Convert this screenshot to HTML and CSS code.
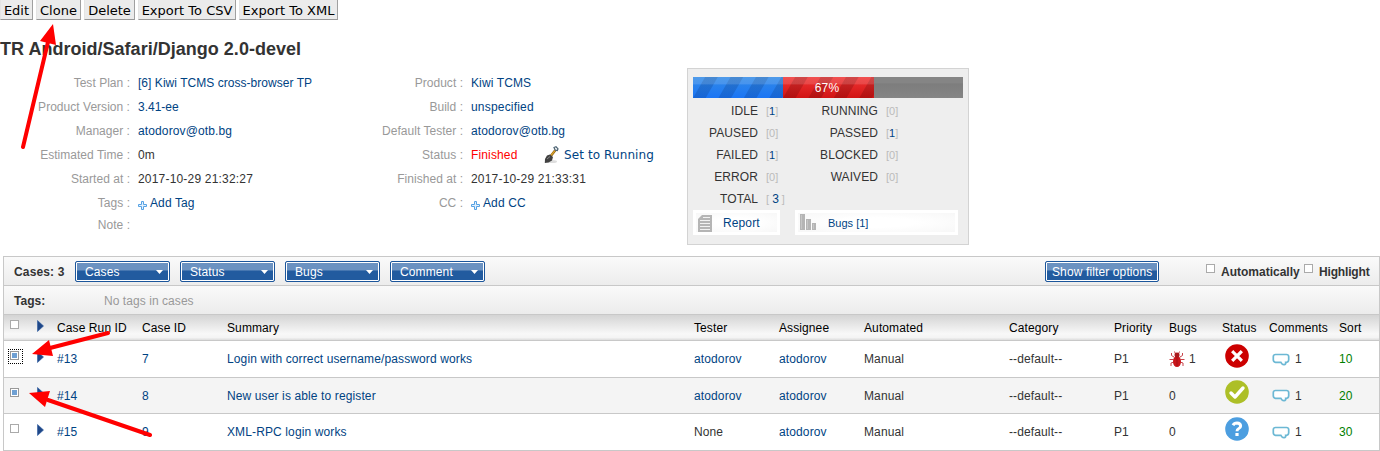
FILE: index.html
```html
<!DOCTYPE html>
<html lang="en">
<head>
<meta charset="utf-8">
<title>TR Android/Safari/Django 2.0-devel</title>
<link rel="stylesheet" href="styles.css">
</head>
<body>
<svg class="defs" width="0" height="0">
  <defs>
    <symbol id="tri" viewBox="0 0 7 12"><path d="M0.5 0.5 6.5 6 0.5 11.5z" fill="#1f4788" stroke="#2c5aa0" stroke-width=".6"/></symbol>
    <symbol id="plus" viewBox="0 0 9 9"><path d="M3.5.5h2v3h3v2h-3v3h-2v-3h-3v-2h3z" fill="#e4f1fd" stroke="#56a2e4"/></symbol>
    <symbol id="bubble" viewBox="0 0 18 13"><path d="M3.5 1.500h11q2 0 2.200 2v3.300q-.2 2.400-2.200 2.500h-.8q.3 1.900-1.700 2.400-1.700.2-3.100-2.400H3.500Q1.300 9 1.300 6.800V3.500q.2-2 2.200-2z" fill="#fff" stroke="#6cb8d4" stroke-width="1.700"/></symbol>
  </defs>
</svg>
<div class="toolbar">
  <button class="b-edit">Edit</button><button class="b-clone">Clone</button><button class="b-delete">Delete</button><button class="b-csv">Export To CSV</button><button class="b-xml">Export To XML</button>
</div>
<h1>TR Android/Safari/Django 2.0-devel</h1>
<div class="summary">
  <dl class="info first">
    <dt>Test Plan :</dt><dd><a class="plan">[6] Kiwi TCMS cross-browser TP</a></dd>
    <dt>Product Version :</dt><dd><a>3.41-ee</a></dd>
    <dt>Manager :</dt><dd><a class="wide">atodorov@otb.bg</a></dd>
    <dt>Estimated Time :</dt><dd>0m</dd>
    <dt>Started at :</dt><dd class="date">2017-10-29 21:32:27</dd>
    <dt>Tags :</dt><dd><svg class="plus"><use href="#plus"/></svg><a class="wide">Add Tag</a></dd>
    <dt>Note :</dt><dd></dd>
  </dl>
  <dl class="info second">
    <dt>Product :</dt><dd><a class="wide">Kiwi TCMS</a></dd>
    <dt>Build :</dt><dd><a class="wide date">unspecified</a></dd>
    <dt>Default Tester :</dt><dd><a class="wide">atodorov@otb.bg</a></dd>
    <dt>Status :</dt><dd><span class="finished">Finished</span><svg class="shovel" viewBox="0 0 16 18"><ellipse cx="8" cy="15.500" rx="5" ry="1.500" fill="#ddd"/><path d="M6 11 11.500 4" stroke="#8a5a10" stroke-width="2.400"/><path d="M6.500 10 11.500 4" stroke="#d9a42c" stroke-width="1.200"/><path d="M10 1.500 12 .8l2 2-.7 1.700-2-.3z" fill="#fff" stroke="#4d6474" stroke-width="1.200"/><path d="M3 9.500 6 8.500 9 11 8 14.500 4.500 16.500.8 17 1 13z" fill="#414141"/><path d="M3 13 6 10.500" stroke="#888"/></svg><a class="running">Set to Running</a></dd>
    <dt>Finished at :</dt><dd class="date">2017-10-29 21:33:31</dd>
    <dt>CC :</dt><dd><svg class="plus"><use href="#plus"/></svg><a class="wide">Add CC</a></dd>
  </dl>
  <div class="stats">
    <div class="progress"><div class="seg blue"></div><div class="seg red"></div><span class="pct">67%</span></div>
    <div class="counts">
      <span>IDLE</span><i>[<a>1</a>]</i><span>RUNNING</span><i>[0]</i>
      <span>PAUSED</span><i>[0]</i><span>PASSED</span><i>[<a>1</a>]</i>
      <span>FAILED</span><i>[<a>1</a>]</i><span>BLOCKED</span><i>[0]</i>
      <span>ERROR</span><i>[0]</i><span>WAIVED</span><i>[0]</i>
      <span>TOTAL</span><i>[ <a class="total">3</a> ]</i>
    </div>
    <div class="reports">
      <a class="rep report"><svg width="14" height="17" viewBox="0 0 14 17"><path d="M4 0h10v17H0V4z" fill="#b5b5b5"/><path d="M2 5.500h10M2 8.500h10M2 11.500h10M2 14.500h10M5 2.500h7" stroke="#f2f2f2"/></svg><span>Report</span></a>
      <a class="rep bugs"><svg width="16" height="17" viewBox="0 0 16 17"><path d="M0 0h5v16H0zM6 5h5v11H6zM12 9h4v7h-4z" fill="#b5b5b5"/><path d="M1.500 1v14M7.500 6v9M13.500 10v5" stroke="#c6c6c6"/></svg><span>Bugs [1]</span></a>
    </div>
  </div>
</div>
<div class="cases">
  <div class="bar">
    <b class="count">Cases: 3</b>
    <span class="drop">Cases</span><span class="drop">Status</span><span class="drop">Bugs</span><span class="drop">Comment</span>
    <span class="drop filter">Show filter options</span>
    <span class="box b1"></span><b class="auto">Automatically</b><span class="box b2"></span><b class="high">Highlight</b>
  </div>
  <div class="bar tags"><b>Tags:</b><span>No tags in cases</span></div>
  <div class="row head">
    <span class="box"></span><svg class="tri"><use href="#tri"/></svg><span>Case Run ID</span><span>Case ID</span><span>Summary</span><span>Tester</span><span>Assignee</span><span>Automated</span><span>Category</span><span>Priority</span><span>Bugs</span><span>Status</span><span>Comments</span><span>Sort</span>
  </div>
  <div class="row r1">
    <span class="box on focus"></span><svg class="tri"><use href="#tri"/></svg><a>#13</a><a>7</a><a>Login with correct username/password works</a><a>atodorov</a><a>atodorov</a><span>Manual</span><span>--default--</span><span>P1</span>
    <span class="bugcell"><svg width="16" height="16" viewBox="0 0 16 16"><g fill="none" stroke="#c8444a"><path d="M5 6 2.500 4.500V2M11 6l2.500-1.500V2M4.500 8.500H.5M11.500 8.500h4M5 11l-3 1v3M11 11l3 1v3M6.500 3 5.500.5M9.500 3l1-2.500"/></g><ellipse cx="8" cy="10.500" rx="4" ry="5.500" fill="#c9151b"/><circle cx="8" cy="4" r="2.500" fill="#a9181c"/><path d="M8 6v9" stroke="#a50f14"/></svg>1</span>
    <svg class="status" viewBox="0 0 24 24"><circle cx="12" cy="12" r="11.800" fill="#c00"/><path d="M8.300 8.300l7.400 7.400M15.700 8.300l-7.400 7.400" stroke="#fff" stroke-width="3.200" stroke-linecap="square"/></svg>
    <span class="comment"><svg><use href="#bubble"/></svg>1</span><span class="sort">10</span>
  </div>
  <div class="row r2">
    <span class="box on"></span><svg class="tri"><use href="#tri"/></svg><a>#14</a><a>8</a><a>New user is able to register</a><a>atodorov</a><a>atodorov</a><span>Manual</span><span>--default--</span><span>P1</span><span>0</span>
    <svg class="status" viewBox="0 0 24 24"><circle cx="12" cy="12" r="11.800" fill="#adbf27"/><path d="M6 13l4 4 8-9" fill="none" stroke="#fff" stroke-width="3.400" stroke-linecap="round" stroke-linejoin="round"/></svg>
    <span class="comment"><svg><use href="#bubble"/></svg>1</span><span class="sort">20</span>
  </div>
  <div class="row r3">
    <span class="box"></span><svg class="tri"><use href="#tri"/></svg><a>#15</a><a>9</a><a>XML-RPC login works</a><span>None</span><a>atodorov</a><span>Manual</span><span>--default--</span><span>P1</span><span>0</span>
    <svg class="status" viewBox="0 0 24 24"><circle cx="12" cy="12" r="11.800" fill="#4c9ee0"/><path d="M8 8.300Q9.200 6 12 6q3.500.1 3.600 2.900 0 1.700-1.800 2.600-1.800.8-1.800 2.800" fill="none" stroke="#fff" stroke-width="3"/><path d="M10.400 16h3.200v3h-3.200z" fill="#fff"/></svg>
    <span class="comment"><svg><use href="#bubble"/></svg>1</span><span class="sort">30</span>
  </div>
</div>
<svg class="arrows" width="1380" height="451" viewBox="0 0 1380 451">
  <g stroke="#f00" stroke-width="4" stroke-linecap="round"><path d="M23 147 48 42M108 333 50 348M150 435 48 400"/></g>
  <g fill="#f00"><path d="M53 24 56 45 40 41zM32 354 49 340 53 356zM29 393 50 391 45 407z"/></g>
</svg>
</body>
</html>
```
FILE: styles.css
```css
*, *::after { box-sizing: border-box; }
body {
  margin: 0;
  width: 1380px;
  height: 451px;
  overflow: hidden;
  position: relative;
  background: #fff;
  color: #333;
  font: 12px/16px "Liberation Sans", Arial, sans-serif;
}
a { color: #004383; }
svg { display: block; flex: none; }
.defs { position: absolute; }
.toolbar { display: flex; gap: 3px; height: 20px; }
.toolbar button {
  height: 20px;
  padding: 1px 0 0;
  border: 1px solid #e4e4e4;
  border-top: 0;
  border-right-color: #a0a0a0;
  border-bottom: 1px solid #989898;
  background: #ebebeb;
  color: #000;
  font: 13px/17px "DejaVu Sans", sans-serif;
  white-space: nowrap;
}
.b-edit { width: 33px; }
.b-clone { width: 45px; }
.b-delete { width: 51px; }
.b-csv { width: 98px; }
.b-xml { width: 99px; }
h1 { margin: 17px 0 0; font-size: 18px; line-height: 24px; height: 24px; letter-spacing: .02px; }
.summary { display: flex; height: 195px; padding-top: 7px; }
.info {
  display: grid;
  grid-template-rows: repeat(6, 24px) 20px;
  align-content: start;
  margin: 3px 0 0;
}
.first { grid-template-columns: 130px 203px; }
.second { grid-template-columns: 130px 224px; }
.info dt { color: #999; text-align: right; line-height: 24px; white-space: nowrap; letter-spacing: .03px; }
.first dt:last-of-type { line-height: 20px; }
.info dd { margin: 0; padding-left: 8px; line-height: 24px; display: flex; align-items: center; white-space: nowrap; }
.plan { letter-spacing: .04px; }
.wide { letter-spacing: .12px; }
.date { letter-spacing: .19px; }
.plus { width: 9px; height: 9px; margin: 5px 3px 0 0; }
.finished { color: #f00; width: 47px; letter-spacing: .14px; }
.shovel { width: 16px; height: 18px; margin: 0 4px 0 26px; }
.running { font-family: "DejaVu Sans", sans-serif; letter-spacing: .1px; }
.stats { width: 282px; height: 177px; border: 1px solid #d3d3d3; background: #eee; padding: 8px 5px 0; }
.progress {
  position: relative;
  display: flex;
  height: 21px;
  background: linear-gradient(#858585 0 28%, #7d7d7d 33%, #858585);
}
.seg { width: 90px; }
.blue {
  background:
    linear-gradient(rgba(255,255,255,.14) 0 32%, transparent 38%),
    repeating-linear-gradient(120deg, transparent 0 10px, rgba(0,30,80,.18) 11px 21px, transparent 22px),
    linear-gradient(#328ae6, #1b75f5);
}
.red {
  width: 91px;
  background:
    linear-gradient(rgba(255,255,255,.14) 0 32%, transparent 38%),
    repeating-linear-gradient(120deg, transparent 0 10px, rgba(60,0,0,.2) 11px 21px, transparent 22px),
    linear-gradient(#ef3434, #d11414);
}
.pct { position: absolute; left: 0; right: 2px; top: 3px; text-align: center; color: #fff; letter-spacing: .15px; }
.counts { display: grid; grid-template-columns: 65px 55px 65px 60px; grid-auto-rows: 22px; line-height: 22px; padding-top: 2px; height: 112px; }
.counts span { text-align: right; white-space: nowrap; letter-spacing: .08px; }
.counts i { padding-left: 8px; color: #bbb; font-style: normal; font-size: 11px; line-height: 23px; white-space: nowrap; }
.total { font-size: 12px; }
.reports { display: flex; gap: 15px; }
.rep { display: flex; height: 25px; border: 3px solid #fff; background: radial-gradient(ellipse, #fff 35%, #f7f7f7); padding: 2px 0 0 2px; }
.report { width: 87px; }
.bugs { width: 163px; font-size: 11px; }
.report span { margin-left: 11px; letter-spacing: .12px; }
.bugs span { margin-left: 12px; }
.bugs svg { margin-top: -1px; }
.cases { width: 1377px; height: 195px; margin-left: 3px; border: 1px solid #c8c8c8; }
.bar { display: flex; height: 29px; align-items: center; padding: 1px 0 0 10px; border-bottom: 1px solid #c8c8c8; background: linear-gradient(#fafafa, #ececec); white-space: nowrap; }
.bar b { letter-spacing: .03px; }
.bar .count { width: 61px; letter-spacing: .15px; }
.drop {
  position: relative;
  width: 95px;
  height: 21px;
  margin-right: 10px;
  border: 1px solid #1c569b;
  border-radius: 2px;
  box-shadow: inset 0 0 0 1px #fff;
  background: linear-gradient(#6b92c1 0 8px, #225b9f 9px);
  color: #fff;
  line-height: 20px;
  padding-left: 9px;
  letter-spacing: .12px;
}
.drop:not(.filter)::after { content: ""; position: absolute; right: 6px; top: 8px; width: 7px; height: 4px; background: #fff; clip-path: polygon(0 0, 100% 0, 50% 100%); }
.filter { width: 114px; margin: 0 47px 0 550px; padding-left: 6px; }
.box { width: 9px; height: 9px; border: 1px solid #aaa; background: #fff; flex: none; }
.b1, .b2 { margin-top: -7px; }
.bar .auto { margin-left: 6px; width: 83px; letter-spacing: 0; }
.bar .high { margin-left: 6px; letter-spacing: -.17px; }
.auto, .high { padding-top: 1px; }
.tags b { width: 90px; }
.tags span { color: #999; letter-spacing: .06px; }
.row {
  display: grid;
  grid-template-columns: 27px 20px 85px 85px 467px 85px 85px 145px 105px 55px 53px 47px 70px 40px;
  padding-left: 6px;
  align-items: center;
  border-bottom: 1px solid #c8c8c8;
  white-space: nowrap;
  letter-spacing: .12px;
}
.head { height: 26px; background: linear-gradient(#d4d4d4, #f8f8f8 75%, #f4f4f4 90%, #ddd); color: #000; padding-top: 1px; letter-spacing: .1px; }
.r1 { height: 37px; }
.r2 { height: 36px; background: #f4f4f4; }
.r3 { height: 36px; border: 0; }
.tri { width: 7px; height: 12px; margin-top: -5px; }
.row .box { margin-top: -8px; }
.r2 .box { margin-top: -6px; }
.on { background: #6fa0d3; border-color: #999; box-shadow: inset 0 0 0 1px #fff; }
.focus { position: relative; }
.focus::after { content: ""; position: absolute; left: -3px; top: -3px; width: 15px; height: 15px; border: 1px dotted #000; }
.status { width: 24px; height: 24px; margin: -7px 0 0 3px; }
.bugcell { display: flex; gap: 4px; }
.comment { display: flex; gap: 5px; padding-left: 3px; align-items: center; }
.comment svg { width: 18px; height: 13px; }
.sort { color: green; }
.arrows { position: absolute; left: 0; top: 0; }
```
